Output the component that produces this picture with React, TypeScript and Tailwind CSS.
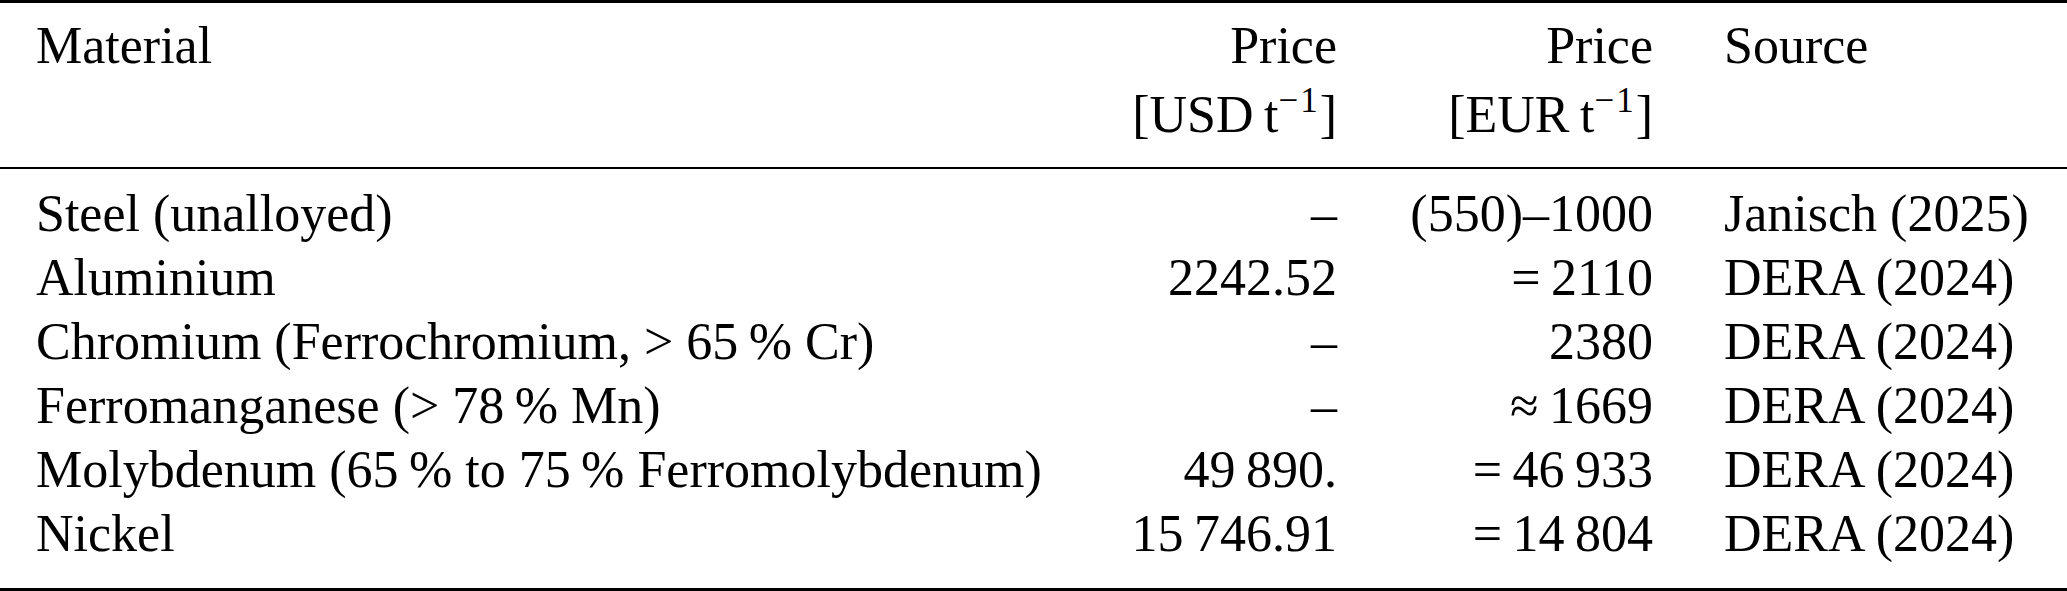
const rows: [string, string, string, string][] = [
  ["Steel (unalloyed)", "–", "(550)–1000", "Janisch (2025)"],
  ["Aluminium", "2242.52", "=\u20092110", "DERA (2024)"],
  ["Chromium (Ferrochromium, > 65\u2009% Cr)", "–", "2380", "DERA (2024)"],
  ["Ferromanganese (> 78\u2009% Mn)", "–", "≈\u20091669", "DERA (2024)"],
  [
    "Molybdenum (65\u2009% to 75\u2009% Ferromolybdenum)",
    "49\u2009890.",
    "=\u200946\u2009933",
    "DERA (2024)",
  ],
  ["Nickel", "15\u2009746.91", "=\u200914\u2009804", "DERA (2024)"],
];

function Unit({ currency }: { currency: string }) {
  return (
    <span className="mt-[5px]">
      [{currency}
      {"\u2009"}t
      <span className="align-[20px] text-[35px] leading-[0] tracking-[2px]">−1</span>]
    </span>
  );
}

export default function App() {
  const grid = "grid grid-cols-[1fr_298px_316px_379px]";

  return (
    <div className="w-full bg-white text-black font-['Liberation_Serif','Times_New_Roman',serif] text-[52px] leading-[64px]">
      <div className="h-[3px] bg-black" />

      {/* header */}
      <div className={`${grid} pt-[11px] pb-[20px]`}>
        <div className="pl-[36px]">Material</div>
        <div className="flex flex-col items-end pr-[35px]">
          <span>Price</span>
          <Unit currency="USD" />
        </div>
        <div className="flex flex-col items-end pr-[35px]">
          <span>Price</span>
          <Unit currency="EUR" />
        </div>
        <div className="pl-[36px]">Source</div>
      </div>

      <div className="h-[2px] bg-black" />

      {/* body */}
      <div className="pt-[13px] pb-[22px]">
        {rows.map((r) => (
          <div key={r[0]} className={grid}>
            <div className="pl-[36px] whitespace-nowrap">{r[0]}</div>
            <div className="pr-[35px] text-right whitespace-nowrap">{r[1]}</div>
            <div className="pr-[35px] text-right whitespace-nowrap">{r[2]}</div>
            <div className="pl-[36px] whitespace-nowrap">{r[3]}</div>
          </div>
        ))}
      </div>

      <div className="h-[3px] bg-black" />
    </div>
  );
}
